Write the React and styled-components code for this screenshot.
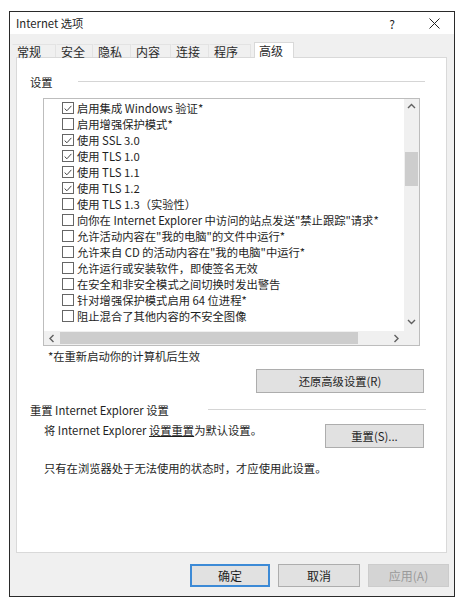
import React from "react";
import styled, { createGlobalStyle } from "styled-components";

const GlobalStyle = createGlobalStyle`
  body {
    margin: 0;
    background: #ffffff;
    font-family: "Noto Sans CJK SC", "Noto Sans", sans-serif;
    font-size: 11.3px;
    color: #1e1e1e;
  }
`;

const tabs = [
  { label: "常规", width: 44 },
  { label: "安全", width: 37 },
  { label: "隐私", width: 38 },
  { label: "内容", width: 40 },
  { label: "连接", width: 38 },
  { label: "程序", width: 42 },
  { label: "高级", width: 40, active: true },
];

const options = [
  { label: "启用集成 Windows 验证*", checked: true },
  { label: "启用增强保护模式*" },
  { label: "使用 SSL 3.0", checked: true },
  { label: "使用 TLS 1.0", checked: true },
  { label: "使用 TLS 1.1", checked: true },
  { label: "使用 TLS 1.2", checked: true },
  { label: "使用 TLS 1.3（实验性）" },
  { label: "向你在 Internet Explorer 中访问的站点发送\"禁止跟踪\"请求*" },
  { label: "允许活动内容在\"我的电脑\"的文件中运行*" },
  { label: "允许来自 CD 的活动内容在\"我的电脑\"中运行*" },
  { label: "允许运行或安装软件，即使签名无效" },
  { label: "在安全和非安全模式之间切换时发出警告" },
  { label: "针对增强保护模式启用 64 位进程*" },
  { label: "阻止混合了其他内容的不安全图像" },
];

function Chevron({ dir }) {
  const paths = {
    up: "M1 5 L4.5 1.5 L8 5",
    down: "M1 2 L4.5 5.5 L8 2",
    left: "M5.5 1 L2 4.5 L5.5 8",
    right: "M2.5 1 L6 4.5 L2.5 8",
  };
  return (
    <svg width="9" height="9" viewBox="0 0 9 9">
      <path d={paths[dir]} fill="none" stroke="#606060" strokeWidth="1.4" />
    </svg>
  );
}

export default function App() {
  return (
    <Page>
      <GlobalStyle />
      <Window>
        <TitleBar>
          <Title>Internet 选项</Title>
          <Caption $width={44}>?</Caption>
          <Caption $width={40}>
            <svg width="11" height="11" viewBox="0 0 11 11">
              <path d="M0.5 0.5 L10.5 10.5 M10.5 0.5 L0.5 10.5" stroke="#222" strokeWidth="1" />
            </svg>
          </Caption>
        </TitleBar>

        <TabStrip>
          {tabs.map((t) => (
            <Tab key={t.label} $width={t.width} $active={t.active}>
              {t.label}
            </Tab>
          ))}
        </TabStrip>

        <Panel>
          <GroupHeader>
            <GroupLabel $width={48}>设置</GroupLabel>
            <GroupLine $right={21} />
          </GroupHeader>

          <ListBox>
            <Items>
              {options.map((o) => (
                <Item key={o.label}>
                  <Check>
                    {o.checked && (
                      <svg width="11" height="11" viewBox="0 0 11 11">
                        <path d="M1.8 5.6 L4.3 8 L9.2 2.6" fill="none" stroke="#444" strokeWidth="1.1" />
                      </svg>
                    )}
                  </Check>
                  <span>{o.label}</span>
                </Item>
              ))}
            </Items>
            <VScroll>
              <ArrowBox $h={17}><Chevron dir="up" /></ArrowBox>
              <VTrack>
                <VThumb />
              </VTrack>
              <ArrowBox $h={17}><Chevron dir="down" /></ArrowBox>
            </VScroll>
            <HScroll>
              <ArrowBox $w={16}><Chevron dir="left" /></ArrowBox>
              <HTrack>
                <HThumb />
              </HTrack>
              <ArrowBox $w={16}><Chevron dir="right" /></ArrowBox>
            </HScroll>
            <Corner />
          </ListBox>

          <Note>*在重新启动你的计算机后生效</Note>
          <PanelButton $width={168} $top={5}>还原高级设置(R)</PanelButton>

          <GroupHeader $top={9}>
            <GroupLabel $width={178}>重置 Internet Explorer 设置</GroupLabel>
            <GroupLine $right={20} />
          </GroupHeader>

          <ResetRow>
            <BodyText>
              将 Internet Explorer <Underlined>设置重置</Underlined>为默认设置。
            </BodyText>
            <PanelButton $width={99} $top={2}>重置(S)...</PanelButton>
          </ResetRow>

          <BodyText $top={12}>只有在浏览器处于无法使用的状态时，才应使用此设置。</BodyText>
        </Panel>

        <Footer>
          <DialogButton $width={80} $focused>确定</DialogButton>
          <DialogButton $width={82}>取消</DialogButton>
          <DialogButton $width={81} $disabled>应用(A)</DialogButton>
        </Footer>
      </Window>
    </Page>
  );
}

const Page = styled.div`
  padding: 11px 0 0 9px;
`;

const Window = styled.div`
  width: 446px;
  height: 586px;
  box-sizing: border-box;
  border: 1px solid #2a2a2a;
  background: #f0f0f0;
  display: flex;
  flex-direction: column;
`;

const TitleBar = styled.div`
  height: 22px;
  background: #ffffff;
  display: flex;
  align-items: center;
  padding-left: 6px;
`;

const Title = styled.div`
  flex: 1;
  line-height: 16px;
`;

const Caption = styled.div`
  width: ${(p) => p.$width}px;
  height: 22px;
  display: flex;
  align-items: center;
  justify-content: center;
  font-size: 12px;
  color: #222;
`;

const TabStrip = styled.div`
  display: flex;
  align-items: flex-end;
  height: 15px;
  margin-top: 8px;
  padding-left: 2px;
  position: relative;
  z-index: 1;
`;

const Tab = styled.div`
  width: ${(p) => p.$width}px;
  height: ${(p) => (p.$active ? 16 : 13)}px;
  box-sizing: border-box;
  padding-left: 4px;
  padding-top: ${(p) => (p.$active ? 1 : 2)}px;
  margin-left: ${(p) => (p.$active ? 3 : 0)}px;
  margin-bottom: ${(p) => (p.$active ? -1 : 0)}px;
  display: flex;
  align-items: center;
  background: ${(p) => (p.$active ? "#ffffff" : "#f0f0f0")};
  border: 1px solid ${(p) => (p.$active ? "#d9d9d9" : "#e3e3e3")};
  border-bottom: none;
  border-left-color: ${(p) => (p.$active ? "#d9d9d9" : "transparent")};
  font-size: 12px;
  line-height: 14px;
  color: #2a2a2a;
`;

const Panel = styled.div`
  height: 496px;
  margin: 0 7px 0 6px;
  box-sizing: border-box;
  background: #ffffff;
  border: 1px solid #d9d9d9;
  display: flex;
  flex-direction: column;
`;

const GroupHeader = styled.div`
  display: flex;
  align-items: center;
  height: 16px;
  margin-top: ${(p) => p.$top ?? 16}px;
  padding-left: 13px;
`;

const GroupLabel = styled.div`
  width: ${(p) => p.$width}px;
  flex-shrink: 0;
  white-space: nowrap;
  line-height: 16px;
`;

const GroupLine = styled.div`
  flex: 1;
  height: 1px;
  background: #d5d5d5;
  margin-right: ${(p) => p.$right}px;
  margin-top: -2px;
`;

const ListBox = styled.div`
  width: 377px;
  height: 248px;
  box-sizing: border-box;
  margin: 8px 0 0 26px;
  border: 1px solid #bdbdbd;
  display: grid;
  grid-template-columns: 1fr 15px;
  grid-template-rows: 1fr 14px;
  overflow: hidden;
`;

const Items = styled.div`
  padding: 1px 0 0 18px;
  overflow: hidden;
`;

const Item = styled.div`
  height: 16px;
  display: flex;
  align-items: center;
  gap: 3px;
  white-space: nowrap;
  line-height: 16px;
`;

const Check = styled.div`
  width: 12px;
  height: 12px;
  box-sizing: border-box;
  border: 1px solid #666;
  background: #fff;
  display: flex;
  align-items: center;
  justify-content: center;
  flex-shrink: 0;
`;

const VScroll = styled.div`
  display: flex;
  flex-direction: column;
  background: #f0f0f0;
`;

const HScroll = styled.div`
  display: flex;
  background: #f0f0f0;
`;

const ArrowBox = styled.div`
  width: ${(p) => (p.$w ? `${p.$w}px` : "auto")};
  height: ${(p) => (p.$h ? `${p.$h}px` : "auto")};
  flex-shrink: 0;
  display: flex;
  align-items: center;
  justify-content: center;
`;

const VTrack = styled.div`
  flex: 1;
  padding: 36px 1px 0 1px;
`;

const VThumb = styled.div`
  height: 34px;
  background: #cdcdcd;
`;

const HTrack = styled.div`
  flex: 1;
  padding: 1px 0;
`;

const HThumb = styled.div`
  width: 298px;
  height: 100%;
  background: #cdcdcd;
`;

const Corner = styled.div`
  background: #f0f0f0;
`;

const Note = styled.div`
  margin: 2px 0 0 31px;
  line-height: 16px;
`;

const PanelButton = styled.div`
  align-self: flex-end;
  width: ${(p) => p.$width}px;
  height: 24px;
  box-sizing: border-box;
  margin: ${(p) => p.$top}px 22px 0 0;
  background: #e1e1e1;
  border: 1px solid #adadad;
  display: flex;
  align-items: center;
  justify-content: center;
  flex-shrink: 0;
`;

const ResetRow = styled.div`
  display: flex;
  justify-content: space-between;
  align-items: flex-start;
  margin-top: 4px;
`;

const BodyText = styled.div`
  margin: ${(p) => p.$top ?? 0}px 0 0 27px;
  line-height: 16px;
  white-space: nowrap;
`;

const Underlined = styled.span`
  text-decoration: underline;
`;

const Footer = styled.div`
  display: flex;
  justify-content: flex-end;
  gap: 8px;
  margin-top: 11px;
  padding-right: 5px;
`;

const DialogButton = styled.div`
  width: ${(p) => p.$width}px;
  height: 23px;
  box-sizing: border-box;
  display: flex;
  align-items: center;
  justify-content: center;
  font-size: 12px;
  background: ${(p) => (p.$disabled ? "#d4d4d4" : "#e1e1e1")};
  border: ${(p) => (p.$focused ? "2px solid #3c8ad6" : `1px solid ${p.$disabled ? "#cccccc" : "#adadad"}`)};
  color: ${(p) => (p.$disabled ? "#9a9a9a" : "#1e1e1e")};
`;
